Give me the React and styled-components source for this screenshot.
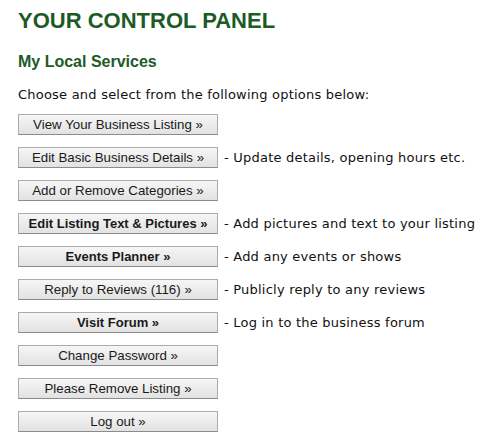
import React from 'react';
import styled, { createGlobalStyle } from 'styled-components';

const GlobalStyle = createGlobalStyle`
  body {
    margin: 0;
    background: #ffffff;
  }
`;

const Panel = {
  container: styled.div`
    padding: 8px 0 0 18px;
    color: #000;
  `,
  title: styled.h1`
    margin: 0;
    font-family: 'Liberation Sans', Arial, sans-serif;
    font-size: 22px;
    line-height: 26px;
    font-weight: bold;
    color: #1c5a26;
  `,
  subtitle: styled.h2`
    margin: 18px 0 0;
    font-family: 'Liberation Sans', Arial, sans-serif;
    font-size: 16px;
    line-height: 20px;
    font-weight: bold;
    color: #1c5a26;
  `,
  intro: styled.p`
    margin: 15px 0 0;
    font-family: 'DejaVu Sans', Verdana, sans-serif;
    font-size: 13px;
    line-height: 16px;
    letter-spacing: 0.22px;
    color: #111;
  `,
};

const Options = {
  list: styled.div`
    display: flex;
    flex-direction: column;
    gap: 12px;
    margin-top: 11px;
  `,
  row: styled.div`
    display: flex;
    align-items: center;
    gap: 6px;
    height: 21px;
  `,
  button: styled.button`
    width: 200px;
    height: 21px;
    box-sizing: border-box;
    padding: 0;
    border: 1px solid #ababab;
    border-bottom-color: #8c8c8c;
    border-radius: 0;
    background: linear-gradient(#f6f6f6, #e2e2e2);
    font-family: 'Liberation Sans', Arial, sans-serif;
    font-size: ${(p) => (p.$bold ? '13px' : '13.3px')};
    font-weight: ${(p) => (p.$bold ? 'bold' : 'normal')};
    color: #1a1a1a;
    text-align: center;
    cursor: pointer;
  `,
  note: styled.span`
    font-family: 'DejaVu Sans', Verdana, sans-serif;
    font-size: 13px;
    letter-spacing: 0.22px;
    color: #111;
    white-space: nowrap;
  `,
};

const items = [
  { label: 'View Your Business Listing »' },
  { label: 'Edit Basic Business Details »', note: '- Update details, opening hours etc.' },
  { label: 'Add or Remove Categories »' },
  { label: 'Edit Listing Text & Pictures »', bold: true, note: '- Add pictures and text to your listing' },
  { label: 'Events Planner »', bold: true, note: '- Add any events or shows' },
  { label: 'Reply to Reviews (116) »', note: '- Publicly reply to any reviews' },
  { label: 'Visit Forum »', bold: true, note: '- Log in to the business forum' },
  { label: 'Change Password »' },
  { label: 'Please Remove Listing »' },
  { label: 'Log out »' },
];

export default function App() {
  return (
    <>
      <GlobalStyle />
      <Panel.container>
        <Panel.title>YOUR CONTROL PANEL</Panel.title>
        <Panel.subtitle>My Local Services</Panel.subtitle>
        <Panel.intro>Choose and select from the following options below:</Panel.intro>
        <Options.list>
          {items.map((item) => (
            <Options.row key={item.label}>
              <Options.button $bold={item.bold}>{item.label}</Options.button>
              {item.note && <Options.note>{item.note}</Options.note>}
            </Options.row>
          ))}
        </Options.list>
      </Panel.container>
    </>
  );
}
